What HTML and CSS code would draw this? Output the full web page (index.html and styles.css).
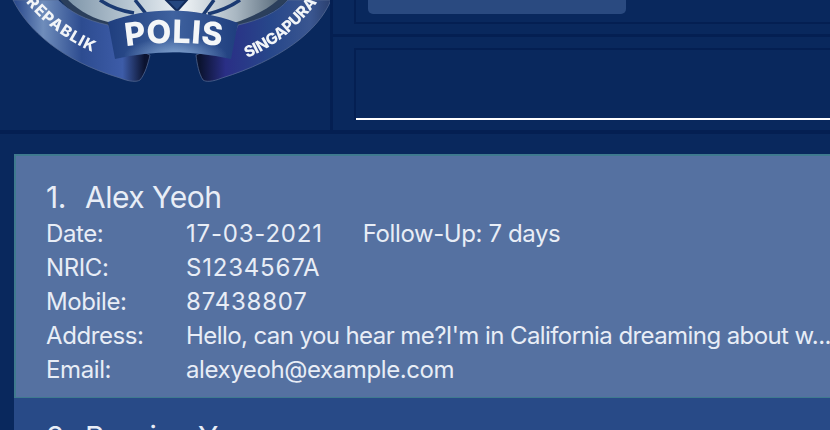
FILE: index.html
```html
<!DOCTYPE html>
<html lang="en">
<head>
    <meta charset="UTF-8">
    <title>Patient Book</title>
    <link rel="stylesheet" href="styles.css">
</head>
<body>

<div class="top-area">
    <div class="logo-pane">
        <svg class="logo" width="333" height="90" viewBox="0 0 333 90">
            <defs>
                <linearGradient id="ribbonLeft" x1="0" y1="0" x2="1" y2="0">
                    <stop offset="0" stop-color="#27468a"/>
                    <stop offset="0.22" stop-color="#6f8dbb"/>
                    <stop offset="0.5" stop-color="#2d4c90"/>
                    <stop offset="0.8" stop-color="#3d5ca8"/>
                    <stop offset="0.96" stop-color="#0b1330"/>
                </linearGradient>
                <linearGradient id="ribbonRight" x1="0" y1="0" x2="1" y2="0">
                    <stop offset="0.03" stop-color="#0b1330"/>
                    <stop offset="0.22" stop-color="#2a2f86"/>
                    <stop offset="0.55" stop-color="#27478a"/>
                    <stop offset="0.85" stop-color="#3a5690"/>
                    <stop offset="1" stop-color="#2a3f6e"/>
                </linearGradient>
                <linearGradient id="ribbonMid" x1="0" y1="0" x2="1" y2="0">
                    <stop offset="0" stop-color="#1f3e7e"/>
                    <stop offset="0.5" stop-color="#3f629f"/>
                    <stop offset="1" stop-color="#1f3e7e"/>
                </linearGradient>
                <radialGradient id="ribbonGlow" cx="0.52" cy="0.95" r="0.4">
                    <stop offset="0" stop-color="#8fb0d8" stop-opacity="0.9"/>
                    <stop offset="1" stop-color="#8fb0d8" stop-opacity="0"/>
                </radialGradient>
                <linearGradient id="shield" x1="0" y1="0" x2="1" y2="0">
                    <stop offset="0" stop-color="#7f96aa"/>
                    <stop offset="0.35" stop-color="#c3d0da"/>
                    <stop offset="0.55" stop-color="#eef2f5"/>
                    <stop offset="0.8" stop-color="#a9b7c2"/>
                    <stop offset="1" stop-color="#5d6f7f"/>
                </linearGradient>
                <path id="leftCurve" d="M26 2 C42 22 65 40 97 54"/>
                <path id="rightCurve" d="M247 58 C275 47 298 28 322 -4"/>
                <path id="polisCurve" d="M126 46.5 Q173 39 226 47"/>
            </defs>
            <path class="rim" d="M60 0 C72 14 88 22 112 27 L236 27 C258 20 276 12 288 0 Z"/>
            <path d="M68 0 C80 12 94 19 112 23 L234 23 C254 16 268 9 278 0 Z" fill="url(#shield)"/>
            <path class="mark" d="M100 0 C110 7 122 11 134 13 M135 0 L147 15 M214 0 L203 15 M240 0 C230 7 220 11 208 14"/>
            <path d="M166 0 L177 11 L187 0 Z" fill="#24467f" stroke="#132c5c" stroke-width="2"/>
            <path class="ribbon" d="M13 0 C28 30 60 60 120 78 C130 82 137 82 140 80 C145 74 148 64 150 55 L115 40 L108 25 C85 20 70 12 58 0 Z" fill="url(#ribbonLeft)"/>
            <path class="ribbon" d="M331 0 C318 32 280 60 222 78 C212 82 206 82 203 80 C199 74 197 64 196 55 L232 40 L238 25 C260 20 278 12 288 0 Z" fill="url(#ribbonRight)"/>
            <path d="M108 22 C150 6 195 7 238 23 L231 59 C190 50 155 50 115 59 Z" fill="url(#ribbonMid)"/>
            <path d="M108 22 C150 6 195 7 238 23 L231 59 C190 50 155 50 115 59 Z" fill="url(#ribbonGlow)"/>
            <text class="logo-small left"><textPath href="#leftCurve">REPABLIK</textPath></text>
            <text class="logo-small right"><textPath href="#rightCurve">SINGAPURA</textPath></text>
            <text class="logo-big"><textPath href="#polisCurve">POLIS</textPath></text>
        </svg>
    </div>
    <div class="right-pane">
        <div class="result-pane">
            <div class="result-box">
                <div class="scroll-thumb"></div>
            </div>
        </div>
        <div class="command-pane">
            <div class="command-box">
                <div class="command-input"></div>
            </div>
        </div>
    </div>
</div>

<div class="list">
    <div class="card selected">
        <div class="card-name"><span class="index">1.</span>Alex Yeoh</div>
        <div class="card-row">
            <span class="label">Date:</span>
            <span class="num">17-03-2021</span>
            <span class="follow-up">Follow-Up: 7 days</span>
        </div>
        <div class="card-row"><span class="label">NRIC:</span><span class="num">S1234567A</span></div>
        <div class="card-row"><span class="label">Mobile:</span><span class="num">87438807</span></div>
        <div class="card-row"><span class="label">Address:</span><span class="address">Hello, can you hear me?I'm in California dreaming about w...</span></div>
        <div class="card-row"><span class="label">Email:</span><span>alexyeoh@example.com</span></div>
    </div>
    <div class="card">
        <div class="card-name"><span class="index">2.</span>Bernice Yu</div>
    </div>
</div>

</body>
</html>
```

FILE: styles.css
```css
html, body {
    margin: 0;
    padding: 0;
}
body {
    width: 830px;
    height: 430px;
    overflow: hidden;
    background: #09285d;
    font-family: Inter, "Liberation Sans", sans-serif;
    color: #e8edf6;
}
.top-area {
    display: flex;
    height: 134px;
    box-sizing: border-box;
    border-bottom: 4px solid #041f52;
}
.logo-pane {
    width: 330px;
    flex: none;
    border-right: 3px solid #041f52;
    overflow: hidden;
}
.logo {
    display: block;
    filter: blur(0.4px);
}
.rim {
    fill: #2b3f5c;
}
.mark {
    fill: none;
    stroke: #1b3a72;
    stroke-width: 3.5;
}
.ribbon {
    stroke: #5a6f96;
    stroke-width: 0.7;
}
.logo-small {
    font-family: Inter, sans-serif;
    font-size: 15.5px;
    font-weight: 800;
    fill: #f2f5f8;
}
.logo-small.left {
    letter-spacing: 1.2px;
}
.logo-small.right {
    letter-spacing: -0.3px;
}
.logo-big {
    font-family: Inter, sans-serif;
    font-size: 32px;
    font-weight: 800;
    letter-spacing: 0.5px;
    fill: #f4f6f8;
}
.right-pane {
    flex: 1;
    display: flex;
    flex-direction: column;
    min-width: 0;
}
.result-pane {
    height: 34px;
    flex: none;
    padding-left: 21px;
    border-bottom: 3px solid #041f52;
}
.result-box {
    height: 22px;
    padding-left: 12px;
    border-left: 2px solid #041f52;
    border-bottom: 2px solid #041f52;
}
.scroll-thumb {
    width: 258px;
    height: 14px;
    background: #2a4a80;
    border-radius: 0 0 5px 5px;
}
.command-pane {
    flex: 1;
    padding: 11px 0 0 21px;
}
.command-box {
    border-left: 2px solid #041f52;
    border-top: 2px solid #041f52;
}
.command-input {
    height: 68px;
    border-bottom: 2px solid #fff;
}
.list {
    padding: 20px 0 0 14px;
}
.card {
    height: 244px;
    box-sizing: border-box;
    padding: 20px 0 0 32px;
    background: #284a87;
    font-size: 24px;
    letter-spacing: -0.4px;
}
.card.selected {
    background: #5571a1;
    border: 2px solid #3f7a8f;
    border-right: none;
    border-bottom-width: 1px;
    padding-left: 30px;
    padding-top: 22px;
}
.card-name {
    display: flex;
    font-size: 30px;
    line-height: 39px;
    letter-spacing: -0.5px;
}
.index {
    width: 39px;
    flex: none;
}
.card-row {
    display: flex;
    line-height: 34px;
    white-space: nowrap;
}
.label {
    width: 140px;
    flex: none;
}
.num {
    letter-spacing: 0.8px;
}
.address {
    letter-spacing: -0.58px;
}
.follow-up {
    letter-spacing: -0.4px;
    margin-left: 40px;
}
```
